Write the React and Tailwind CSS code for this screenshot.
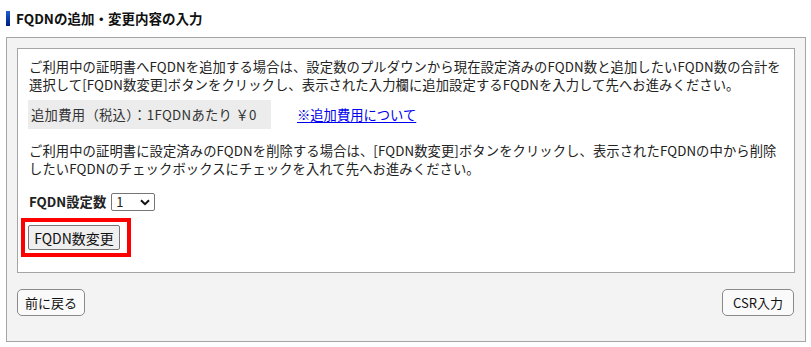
export default function App() {
  const font = { fontFamily: '"Noto Sans CJK JP", "Noto Sans", sans-serif' };
  return (
    <div className="w-[811px] h-[347px] bg-white text-[#222]" style={font}>
      <div className="pt-[11px] pl-[6px] pr-[5px]">
        <div className="flex items-center h-[15px]">
          <div className="w-[4px] h-[15px] bg-gradient-to-b from-[#1f5fd0] to-[#001a80]"></div>
          <div className="ml-[6px] text-[13.5px] font-bold leading-[15px] text-[#111]">
            FQDNの追加・変更内容の入力
          </div>
        </div>
        <div className="mt-[11px] border border-[#a5a5a5] bg-[#f3f3f3] px-[10px] pt-[10px] pb-[25px]">
          <div className="border border-[#a5a5a5] bg-white px-[10px] pt-[9px] pb-[15px] text-[13.3px] leading-[18px]">
            <p className="pl-[1px] whitespace-nowrap tracking-[0.1px]">
              ご利用中の証明書へFQDNを追加する場合は、設定数のプルダウンから現在設定済みのFQDN数と追加したいFQDN数の合計を
              <br />
              選択して[FQDN数変更]ボタンをクリックし、表示された入力欄に追加設定するFQDNを入力して先へお進みください。
            </p>
            <div className="mt-[6px] flex items-center">
              <div className="h-[29px] w-[243px] bg-[#ececec] flex items-center pl-[3px] text-[#333] tracking-[0.3px]">
                追加費用（税込）：1FQDNあたり ￥0
              </div>
              <a href="#" className="ml-[26px] text-[#0000ee] underline underline-offset-2">
                ※追加費用について
              </a>
            </div>
            <p className="mt-[13px] pl-[1px] whitespace-nowrap tracking-[0.1px]">
              ご利用中の証明書に設定済みのFQDNを削除する場合は、[FQDN数変更]ボタンをクリックし、表示されたFQDNの中から削除
              <br />
              したいFQDNのチェックボックスにチェックを入れて先へお進みください。
            </p>
            <div className="mt-[14px] flex items-center h-[19px] pl-[1px]">
              <span className="font-bold">FQDN設定数</span>
              <div className="relative ml-[5px] w-[44px] h-[18px] border border-[#767676] rounded-[2px] bg-white flex items-center pl-[4px] text-[13px]">
                <span>1</span>
                <svg className="absolute right-[4px] top-[5px]" width="10" height="7" viewBox="0 0 10 7">
                  <path d="M1 1.2 L5 5.2 L9 1.2" fill="none" stroke="#111" strokeWidth="2" />
                </svg>
              </div>
            </div>
            <div className="mt-[7px] -ml-[7px] inline-block border-4 border-[#ff0000] pl-[3px] pr-[7px] py-[3px]">
              <button className="w-[92px] h-[25px] bg-[#efefef] border border-[#767676] rounded-[2px] text-[14px] text-[#111] flex items-center justify-center">
                FQDN数変更
              </button>
            </div>
          </div>
          <div className="mt-[16px] flex justify-between pr-[1px]">
            <button className="w-[68px] h-[27px] bg-[#fafafa] border border-[#8a8a8a] rounded-[5px] text-[13px] text-[#111] flex items-center justify-center">
              前に戻る
            </button>
            <button className="w-[72px] h-[27px] bg-[#fafafa] border border-[#8a8a8a] rounded-[5px] text-[13px] text-[#111] flex items-center justify-center">
              CSR入力
            </button>
          </div>
        </div>
      </div>
    </div>
  );
}
